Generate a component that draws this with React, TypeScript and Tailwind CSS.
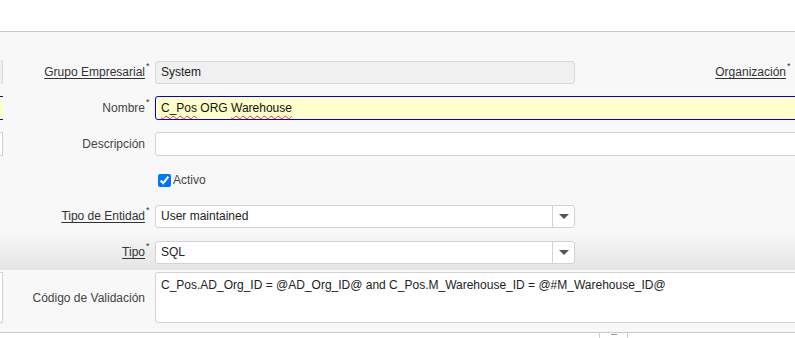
function Label({ text, link, required }: { text: string; link?: boolean; required?: boolean }) {
  return (
    <div className="w-[152px] shrink-0 flex justify-end items-center pr-[6px]">
      <span className={link ? "text-[#333] underline underline-offset-[2px]" : "text-[#444]"}>{text}</span>
      <span className={required ? "w-[4px] self-start -mt-[4px] text-[9px] leading-none text-[#333] pl-[1px]" : "w-[4px]"}>
        {required ? "*" : ""}
      </span>
    </div>
  );
}

function Select({ value }: { value: string }) {
  return (
    <div className="w-[420px] shrink-0 h-[23px] flex bg-white border border-[#d2d2d2] rounded-[3px]">
      <div className="flex-1 flex items-center pl-[5px] text-[#222]">{value}</div>
      <div className="w-[22px] border-l border-[#d2d2d2] flex items-center justify-center">
        <div className="w-0 h-0 border-l-[5px] border-r-[5px] border-t-[5px] border-l-transparent border-r-transparent border-t-[#555]" />
      </div>
    </div>
  );
}

export default function App() {
  return (
    <div className="w-[795px] h-[338px] overflow-hidden bg-white text-[12px] leading-none font-['Liberation_Sans',Arial,sans-serif]">
      <div className="h-[31px] bg-white" />
      <div className="h-[302px] bg-[#f8f8f8] border-t border-b border-[#c8c8c8] pt-[22px] flex flex-col">
        {/* Grupo Empresarial */}
        <div className="h-[36px] flex items-center">
          <div className="w-[3px] shrink-0 h-[24px] bg-[#f0f0f0] border-r border-[#d6d6d6] rounded-r-[3px]" />
          <Label text="Grupo Empresarial" link required />
          <div className="w-[420px] shrink-0 h-[23px] flex items-center pl-[5px] bg-[#f0f0f0] border border-[#d8d8d8] rounded-[3px] text-[#222]">
            System
          </div>
          <div className="flex-1 flex justify-end items-center pr-[5px]">
            <span className="text-[#333] underline underline-offset-[2px]">Organización</span>
            <span className="w-[4px] self-start -mt-[4px] text-[9px] leading-none text-[#333] pl-[1px]">*</span>
          </div>
        </div>

        {/* Nombre */}
        <div className="h-[36px] flex items-center">
          <div className="w-[3px] shrink-0 h-[24px] bg-[#ffffcc] border-t border-b border-[#0000ee]" />
          <Label text="Nombre" required />
          <div className="w-[660px] shrink-0 h-[24px] flex items-center pl-[5px] bg-[#ffffcc] border border-[#0000ee] rounded-l-[3px] text-[#111]">
            <span className="underline decoration-wavy decoration-[#e03030] decoration-1 underline-offset-[3px]">C_Pos</span>
            <span>&nbsp;ORG&nbsp;</span>
            <span className="underline decoration-wavy decoration-[#e03030] decoration-1 underline-offset-[3px]">Warehouse</span>
          </div>
        </div>

        {/* Descripción */}
        <div className="h-[36px] flex items-center">
          <div className="w-[3px] shrink-0 h-[24px] bg-white border-t border-b border-r border-[#d2d2d2]" />
          <Label text="Descripción" />
          <div className="w-[660px] shrink-0 h-[24px] bg-white border border-[#d2d2d2] rounded-l-[3px]" />
        </div>

        {/* Activo */}
        <div className="h-[36px] flex items-center">
          <div className="w-[3px] shrink-0" />
          <div className="w-[152px] shrink-0" />
          <label className="flex items-center ml-[3px] text-[#444]">
            <input type="checkbox" defaultChecked className="w-[13px] h-[13px] m-0 accent-[#0075ff]" />
            <span className="ml-[2px]">Activo</span>
          </label>
        </div>

        {/* Tipo de Entidad */}
        <div className="h-[36px] flex items-center">
          <div className="w-[3px] shrink-0" />
          <Label text="Tipo de Entidad" link required />
          <Select value="User maintained" />
        </div>

        {/* Tipo */}
        <div className="h-[36px] flex items-center bg-linear-to-b from-[#f6f6f6] to-[#e5e5e5]">
          <div className="w-[3px] shrink-0" />
          <Label text="Tipo" link required />
          <Select value="SQL" />
        </div>

        {/* Código de Validación */}
        <div className="flex-1 flex items-start pt-[2px]">
          <div className="w-[3px] shrink-0 h-[51px] bg-white border-t border-b border-r border-[#d2d2d2]" />
          <div className="w-[152px] shrink-0 h-[51px] flex items-center justify-end pr-[6px]">
            <span className="text-[#444]">Código de Validación</span>
            <span className="w-[4px]" />
          </div>
          <div className="w-[660px] shrink-0 h-[51px] bg-white border border-[#d2d2d2] rounded-l-[3px] pl-[5px] pt-[6px] text-[#222]">
            C_Pos.AD_Org_ID = @AD_Org_ID@ and C_Pos.M_Warehouse_ID = @#M_Warehouse_ID@
          </div>
        </div>
      </div>
      <div className="h-[5px] flex">
        <div className="w-[599px] shrink-0" />
        <div className="w-[29px] h-full border-l border-r border-[#d0d0d0] flex justify-center">
          <div className="w-[6px] h-[1px] bg-[#999] mt-[1px]" />
        </div>
      </div>
    </div>
  );
}
